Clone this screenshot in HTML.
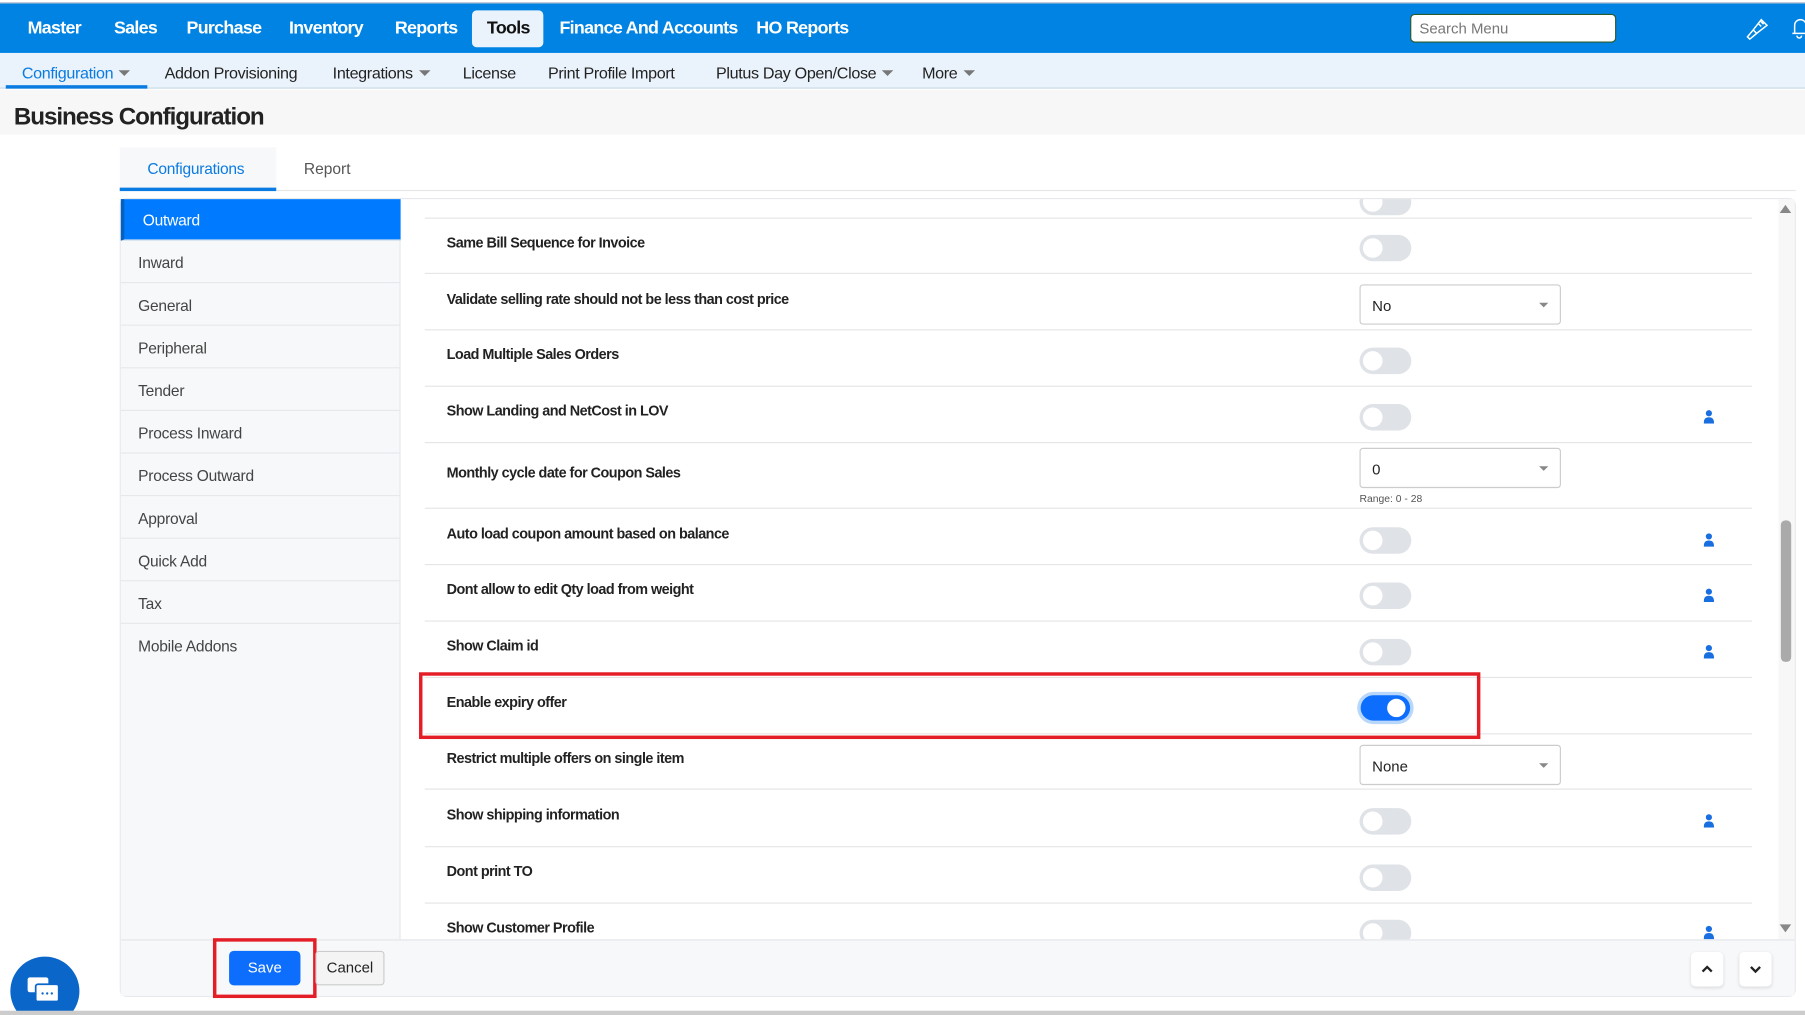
<!DOCTYPE html>
<html><head><meta charset="utf-8"><style>
*{box-sizing:border-box;margin:0;padding:0}
html,body{width:1805px;height:1015px;overflow:hidden;background:#fff;font-family:"Liberation Sans",sans-serif}
#w{position:absolute;left:0;top:0;width:1568px;height:882px;transform:scale(1.15115);transform-origin:0 0;background:#fff;overflow:hidden}
.a{position:absolute}
.top{left:0;top:2px;width:1568px;height:44px;background:#0183e3;border-top:1px solid #ccc}
.nv{top:16px;color:#fff;font-weight:bold;font-size:15.5px;letter-spacing:-0.6px}
.sub{left:0;top:46px;width:1568px;height:31px;background:#eaf3fb;border-bottom:1px solid #c9d9e6}
.sn{top:55px;font-size:14px;color:#222;letter-spacing:-0.3px}
.car{display:inline-block;width:0;height:0;border-left:5px solid transparent;border-right:5px solid transparent;border-top:5px solid #777;margin-left:5px;vertical-align:2px}
.side{left:105px;width:243px;height:36px;border-bottom:1px solid #e6e8eb;font-size:13.5px;color:#444;padding:11px 0 0 15px;letter-spacing:-0.2px}
.lb{left:388px;font-size:12.5px;font-weight:bold;color:#222;letter-spacing:-0.45px}
.sep{left:369px;width:1153px;height:1px;background:#e5e5e5}
.tg{left:1181px;width:45px;height:23px;border-radius:12px;background:#dfe2e6}
.tg:after{content:"";position:absolute;left:3px;top:3px;width:17px;height:17px;border-radius:50%;background:#fff}
.pi{left:1480px;width:9px;height:12px}
.sel{left:1181px;width:175px;height:35px;border:1px solid #ccc;border-radius:3px;font-size:13px;color:#222;padding:10px 0 0 10px}
.sel:after{content:"";position:absolute;right:10px;top:15px;border-left:4px solid transparent;border-right:4px solid transparent;border-top:4px solid #888}
</style></head><body><div id="w">
<div class="a top"></div>
<div class="a nv" style="left:24px">Master</div>
<div class="a nv" style="left:99px">Sales</div>
<div class="a nv" style="left:162px">Purchase</div>
<div class="a nv" style="left:251px">Inventory</div>
<div class="a nv" style="left:343px">Reports</div>
<div class="a" style="left:410px;top:9px;width:62px;height:32px;background:#eaf3fb;border-radius:4px"></div>
<div class="a nv" style="left:423px;color:#111">Tools</div>
<div class="a nv" style="left:486px">Finance And Accounts</div>
<div class="a nv" style="left:657px">HO Reports</div>
<div class="a" style="left:1225px;top:12px;width:179px;height:25px;background:#fff;border:1px solid #2b5a2b;border-radius:4px;font-size:13px;color:#777;padding:4px 0 0 7px">Search Menu</div>
<svg class="a" style="left:1515px;top:14px" width="22" height="22" viewBox="0 0 22 22" fill="none" stroke="#fff" stroke-width="1.3"><path d="M8 12l7-9 5 5-9 7z M8 12l-5 6 2 2 6-5 M12 6l3 3 M14 4l3 3"/></svg>
<svg class="a" style="left:1555px;top:13px" width="14" height="22" viewBox="0 0 14 22" fill="none" stroke="#fff" stroke-width="1.3"><path d="M2 16h12M4 16V9a5 5 0 0110 0 M6 18a2 2 0 004 0"/></svg>
<div class="a sub"></div>
<div class="a sn" style="left:19px;color:#0a7be0">Configuration<span class="car"></span></div>
<div class="a" style="left:5px;top:74px;width:123px;height:3px;background:#0a7be0"></div>
<div class="a sn" style="left:143px">Addon Provisioning</div>
<div class="a sn" style="left:289px">Integrations<span class="car"></span></div>
<div class="a sn" style="left:402px">License</div>
<div class="a sn" style="left:476px">Print Profile Import</div>
<div class="a sn" style="left:622px">Plutus Day Open/Close<span class="car"></span></div>
<div class="a sn" style="left:801px">More<span class="car"></span></div>
<div class="a" style="left:0;top:78px;width:1568px;height:39px;background:#f7f7f7"></div>
<div class="a" style="left:12px;top:90px;font-size:21px;font-weight:bold;color:#222;letter-spacing:-0.9px">Business Configuration</div>
<div class="a" style="left:104px;top:128px;width:136px;height:38px;background:#f7f8fa;border-bottom:3px solid #0a7be0"></div>
<div class="a" style="left:128px;top:139px;font-size:13.5px;color:#0a7be0;letter-spacing:-0.2px">Configurations</div>
<div class="a" style="left:264px;top:139px;font-size:13.5px;color:#555">Report</div>
<div class="a" style="left:240px;top:165px;width:1320px;height:1px;background:#e6e6e6"></div>
<div class="a" style="left:104px;top:172px;width:1456px;height:694px;border:1px solid #e6e8eb;border-radius:6px"></div>
<div class="a" style="left:105px;top:173px;width:243px;height:643px;background:#f7f8fa;border-right:1px solid #e6e8eb"></div>
<div class="a side" style="top:173px;background:#007bff;color:#fff;padding-left:16px;border-left:3px solid #0660c0">Outward</div>
<div class="a side" style="top:210px">Inward</div>
<div class="a side" style="top:247px">General</div>
<div class="a side" style="top:284px">Peripheral</div>
<div class="a side" style="top:321px">Tender</div>
<div class="a side" style="top:358px">Process Inward</div>
<div class="a side" style="top:395px">Process Outward</div>
<div class="a side" style="top:432px">Approval</div>
<div class="a side" style="top:469px">Quick Add</div>
<div class="a side" style="top:506px">Tax</div>
<div class="a side" style="top:543px;border:none">Mobile Addons</div>
<div class="a" style="left:349px;top:173px;width:1196px;height:643px;overflow:hidden">
<div style="position:absolute;left:-349px;top:-173px;width:1568px;height:900px">
<div class="a tg" style="top:164px"></div>
<div class="a sep" style="top:189px"></div>
<div class="a lb" style="top:204px">Same Bill Sequence for Invoice</div><div class="a tg" style="top:204px"></div>
<div class="a sep" style="top:237px"></div>
<div class="a lb" style="top:253px">Validate selling rate should not be less than cost price</div><div class="a sel" style="top:247px">No</div>
<div class="a sep" style="top:286px"></div>
<div class="a lb" style="top:301px">Load Multiple Sales Orders</div><div class="a tg" style="top:302px"></div>
<div class="a sep" style="top:335px"></div>
<div class="a lb" style="top:350px">Show Landing and NetCost in LOV</div><div class="a tg" style="top:351px"></div>
<svg class="a pi" style="top:356px" viewBox="0 0 9 12"><circle cx="4.5" cy="3" r="2.7" fill="#1a6fe0"/><path d="M0 12c0-4 1.5-5.5 4.5-5.5S9 8 9 12z" fill="#1a6fe0"/></svg>
<div class="a sep" style="top:384px"></div>
<div class="a lb" style="top:404px">Monthly cycle date for Coupon Sales</div><div class="a sel" style="top:389px;border-radius:3px">0</div>
<div class="a" style="left:1181px;top:428px;font-size:9px;color:#555">Range: 0 - 28</div>
<div class="a sep" style="top:441px"></div>
<div class="a lb" style="top:457px">Auto load coupon amount based on balance</div><div class="a tg" style="top:458px"></div>
<svg class="a pi" style="top:463px" viewBox="0 0 9 12"><circle cx="4.5" cy="3" r="2.7" fill="#1a6fe0"/><path d="M0 12c0-4 1.5-5.5 4.5-5.5S9 8 9 12z" fill="#1a6fe0"/></svg>
<div class="a sep" style="top:490px"></div>
<div class="a lb" style="top:505px">Dont allow to edit Qty load from weight</div><div class="a tg" style="top:506px"></div>
<svg class="a pi" style="top:511px" viewBox="0 0 9 12"><circle cx="4.5" cy="3" r="2.7" fill="#1a6fe0"/><path d="M0 12c0-4 1.5-5.5 4.5-5.5S9 8 9 12z" fill="#1a6fe0"/></svg>
<div class="a sep" style="top:539px"></div>
<div class="a lb" style="top:554px">Show Claim id</div><div class="a tg" style="top:555px"></div>
<svg class="a pi" style="top:560px" viewBox="0 0 9 12"><circle cx="4.5" cy="3" r="2.7" fill="#1a6fe0"/><path d="M0 12c0-4 1.5-5.5 4.5-5.5S9 8 9 12z" fill="#1a6fe0"/></svg>
<div class="a sep" style="top:588px"></div>
<div class="a lb" style="top:603px">Enable expiry offer</div>
<div class="a" style="left:1179px;top:601px;width:49px;height:28px;border-radius:14px;background:#b8d7fb"></div>
<div class="a" style="left:1182px;top:604px;width:43px;height:22px;border-radius:11px;background:#0d6efd"></div>
<div class="a" style="left:1205px;top:607px;width:16px;height:16px;border-radius:50%;background:#fff"></div>
<div class="a sep" style="top:637px"></div>
<div class="a lb" style="top:652px">Restrict multiple offers on single item</div><div class="a sel" style="top:647px">None</div>
<div class="a sep" style="top:685px"></div>
<div class="a lb" style="top:701px">Show shipping information</div><div class="a tg" style="top:702px"></div>
<svg class="a pi" style="top:707px" viewBox="0 0 9 12"><circle cx="4.5" cy="3" r="2.7" fill="#1a6fe0"/><path d="M0 12c0-4 1.5-5.5 4.5-5.5S9 8 9 12z" fill="#1a6fe0"/></svg>
<div class="a sep" style="top:735px"></div>
<div class="a lb" style="top:750px">Dont print TO</div><div class="a tg" style="top:751px"></div>
<div class="a sep" style="top:784px"></div>
<div class="a lb" style="top:799px">Show Customer Profile</div><div class="a tg" style="top:799px"></div>
<svg class="a pi" style="top:804px" viewBox="0 0 9 12"><circle cx="4.5" cy="3" r="2.7" fill="#1a6fe0"/><path d="M0 12c0-4 1.5-5.5 4.5-5.5S9 8 9 12z" fill="#1a6fe0"/></svg>
</div></div>
<div class="a" style="left:364px;top:584px;width:922px;height:58px;border:3px solid #e41e26"></div>
<div class="a" style="left:1545px;top:173px;width:14px;height:643px;background:#f7f7f7"></div>
<div class="a" style="left:1546px;top:178px;border-left:5px solid transparent;border-right:5px solid transparent;border-bottom:7px solid #888"></div>
<div class="a" style="left:1547px;top:452px;width:9px;height:123px;background:#aaa;border-radius:4px"></div>
<div class="a" style="left:1546px;top:803px;border-left:5px solid transparent;border-right:5px solid transparent;border-top:7px solid #888"></div>
<div class="a" style="left:105px;top:816px;width:1454px;height:49px;background:#f7f8fa;border-top:1px solid #e3e5e8"></div>
<div class="a" style="left:185px;top:815px;width:90px;height:52px;border:3px solid #e41e26"></div>
<div class="a" style="left:199px;top:826px;width:62px;height:30px;background:#0d6efd;border-radius:4px;color:#fff;font-size:13px;text-align:center;line-height:30px">Save</div>
<div class="a" style="left:274px;top:826px;width:60px;height:30px;background:#f4f4f4;border:1px solid #ccc;border-radius:3px;color:#222;font-size:13px;text-align:center;line-height:28px">Cancel</div>
<div class="a" style="left:1469px;top:827px;width:28px;height:30px;background:#fff;border-radius:4px;box-shadow:0 1px 3px rgba(0,0,0,.12)"><svg width="28" height="30" viewBox="0 0 28 30"><path d="M10 17l4-4 4 4" fill="none" stroke="#222" stroke-width="2"/></svg></div>
<div class="a" style="left:1511px;top:827px;width:28px;height:30px;background:#fff;border-radius:4px;box-shadow:0 1px 3px rgba(0,0,0,.12)"><svg width="28" height="30" viewBox="0 0 28 30"><path d="M10 13l4 4 4-4" fill="none" stroke="#222" stroke-width="2"/></svg></div>
<div class="a" style="left:9px;top:831px;width:60px;height:60px;border-radius:50%;background:#0a66c9"></div>
<svg class="a" style="left:22px;top:847px" width="34" height="28" viewBox="0 0 34 28"><rect x="2" y="2" width="18" height="13" rx="2" fill="#fff"/><rect x="9" y="8" width="20" height="15" rx="2" fill="#fff" stroke="#0a66c9" stroke-width="1.5"/><circle cx="15" cy="16" r="1" fill="#0a66c9"/><circle cx="19" cy="16" r="1" fill="#0a66c9"/><circle cx="23" cy="16" r="1" fill="#0a66c9"/></svg>
<div class="a" style="left:0;top:878px;width:1568px;height:4px;background:#ccc"></div>
</div></body></html>
